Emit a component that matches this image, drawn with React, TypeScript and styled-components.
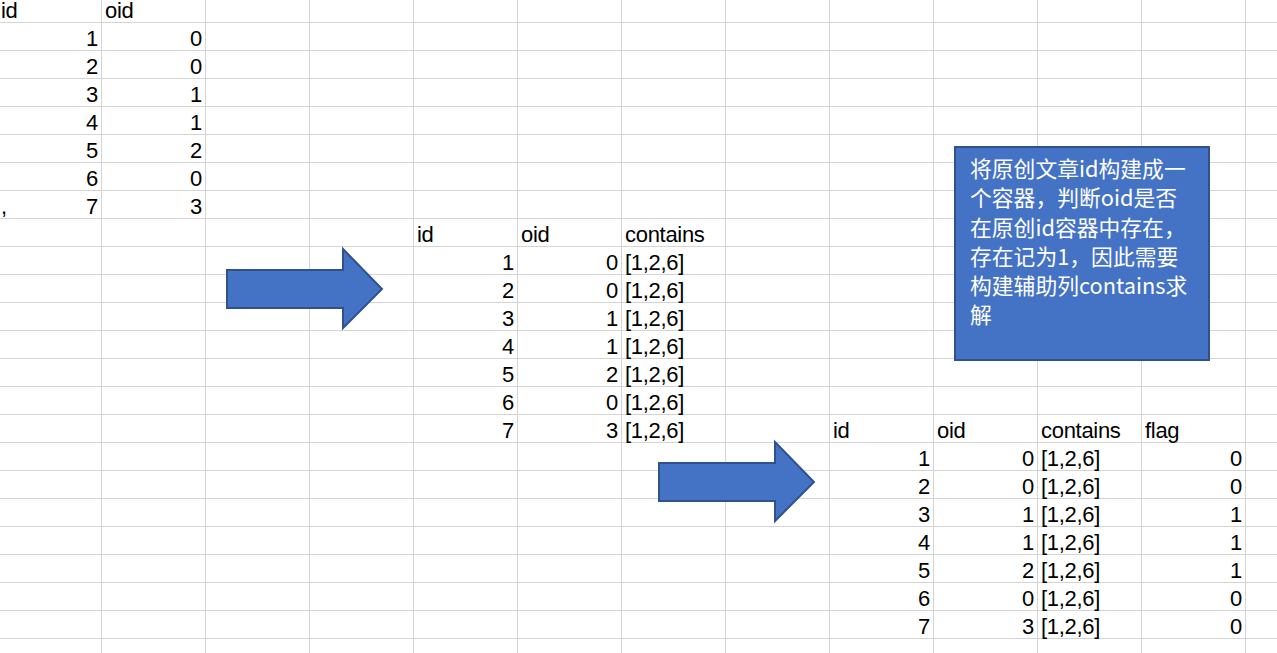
import React from 'react'
import styled, { createGlobalStyle } from 'styled-components'

const COLS = 13
const ROWS = 24
const COL_W = 104
const ROW_H = 28

const GlobalStyle = createGlobalStyle`
  html, body {
    margin: 0;
    padding: 0;
    background: #fff;
    overflow: hidden;
  }
`

const Sheet = styled.div`
  position: relative;
  width: 1277px;
  height: 653px;
  overflow: hidden;
  background: #fff;
`

const Grid = styled.div`
  display: grid;
  grid-template-columns: repeat(${COLS}, ${COL_W}px);
  grid-auto-rows: ${ROW_H}px;
  width: max-content;
  margin: -5px 0 0 -2px;
  font-family: 'Liberation Sans', Arial, sans-serif;
  font-size: 22px;
  letter-spacing: -0.3px;
  color: #000;
`

const Cell = styled.div<{ $align: 'left' | 'right' | 'split' }>`
  box-sizing: border-box;
  display: flex;
  align-items: flex-end;
  justify-content: ${(p) =>
    p.$align === 'right' ? 'flex-end' : p.$align === 'split' ? 'space-between' : 'flex-start'};
  padding: 0 3px 0 3px;
  border-right: 1px solid #d4d4d4;
  border-bottom: 1px solid #d4d4d4;
  line-height: 1;
  white-space: nowrap;
`

// shapes floating over the sheet
const Arrow = styled.svg<{ $x: number; $y: number }>`
  position: absolute;
  left: ${(p) => p.$x}px;
  top: ${(p) => p.$y}px;
  width: 160px;
  height: 84px;
  overflow: visible;

  polygon {
    fill: #4472c4;
    stroke: #2f528f;
    stroke-width: 2;
    stroke-linejoin: miter;
  }
`

const Note = styled.div`
  position: absolute;
  left: 954px;
  top: 146px;
  width: 256px;
  height: 215px;
  box-sizing: border-box;
  padding: 5px 8px 0 14px;
  background: #4472c4;
  border: 2px solid #2f528f;
  color: #fff;
  font-family: 'Noto Sans CJK SC', 'Microsoft YaHei', sans-serif;
  font-size: 21.8px;
  line-height: 29.3px;
  white-space: nowrap;
`

type Entry = { text: string; align: 'left' | 'right' | 'split'; lead?: string }

const cells: Record<string, Entry> = {}
const put = (r: number, c: number, text: string | number, align: Entry['align'] = 'right') => {
  cells[`${r}-${c}`] = { text: String(text), align }
}

// first table: the source data
put(0, 0, 'id', 'left')
put(0, 1, 'oid', 'left')
const oids = [0, 0, 1, 1, 2, 0, 3]
oids.forEach((o, i) => {
  put(i + 1, 0, i + 1)
  put(i + 1, 1, o)
})
cells['7-0'] = { text: '7', align: 'split', lead: ',' }

// second table: with the helper column
put(8, 4, 'id', 'left')
put(8, 5, 'oid', 'left')
put(8, 6, 'contains', 'left')
oids.forEach((o, i) => {
  put(i + 9, 4, i + 1)
  put(i + 9, 5, o)
  put(i + 9, 6, '[1,2,6]', 'left')
})

// third table: the result flag
const flags = [0, 0, 1, 1, 1, 0, 0]
put(15, 8, 'id', 'left')
put(15, 9, 'oid', 'left')
put(15, 10, 'contains', 'left')
put(15, 11, 'flag', 'left')
oids.forEach((o, i) => {
  put(i + 16, 8, i + 1)
  put(i + 16, 9, o)
  put(i + 16, 10, '[1,2,6]', 'left')
  put(i + 16, 11, flags[i])
})

const noteLines = [
  '将原创文章id构建成一',
  '个容器，判断oid是否',
  '在原创id容器中存在，',
  '存在记为1，因此需要',
  '构建辅助列contains求',
  '解',
]

function RightArrow({ x, y }: { x: number; y: number }) {
  return (
    <Arrow $x={x} $y={y} viewBox="0 0 160 84">
      <polygon points="2,22 118,22 118,1 157,41 118,80 118,60 2,60" />
    </Arrow>
  )
}

export default function App() {
  const rows = []
  for (let r = 0; r < ROWS; r++) {
    for (let c = 0; c < COLS; c++) {
      const e = cells[`${r}-${c}`]
      rows.push(
        <Cell key={`${r}-${c}`} $align={e ? e.align : 'left'}>
          {e?.lead && <span>{e.lead}</span>}
          {e && <span>{e.text}</span>}
        </Cell>
      )
    }
  }

  return (
    <>
      <GlobalStyle />
      <Sheet>
        <Grid>{rows}</Grid>
        <RightArrow x={225} y={248} />
        <RightArrow x={657} y={441} />
        <Note>
          {noteLines.map((l) => (
            <div key={l}>{l}</div>
          ))}
        </Note>
      </Sheet>
    </>
  )
}
